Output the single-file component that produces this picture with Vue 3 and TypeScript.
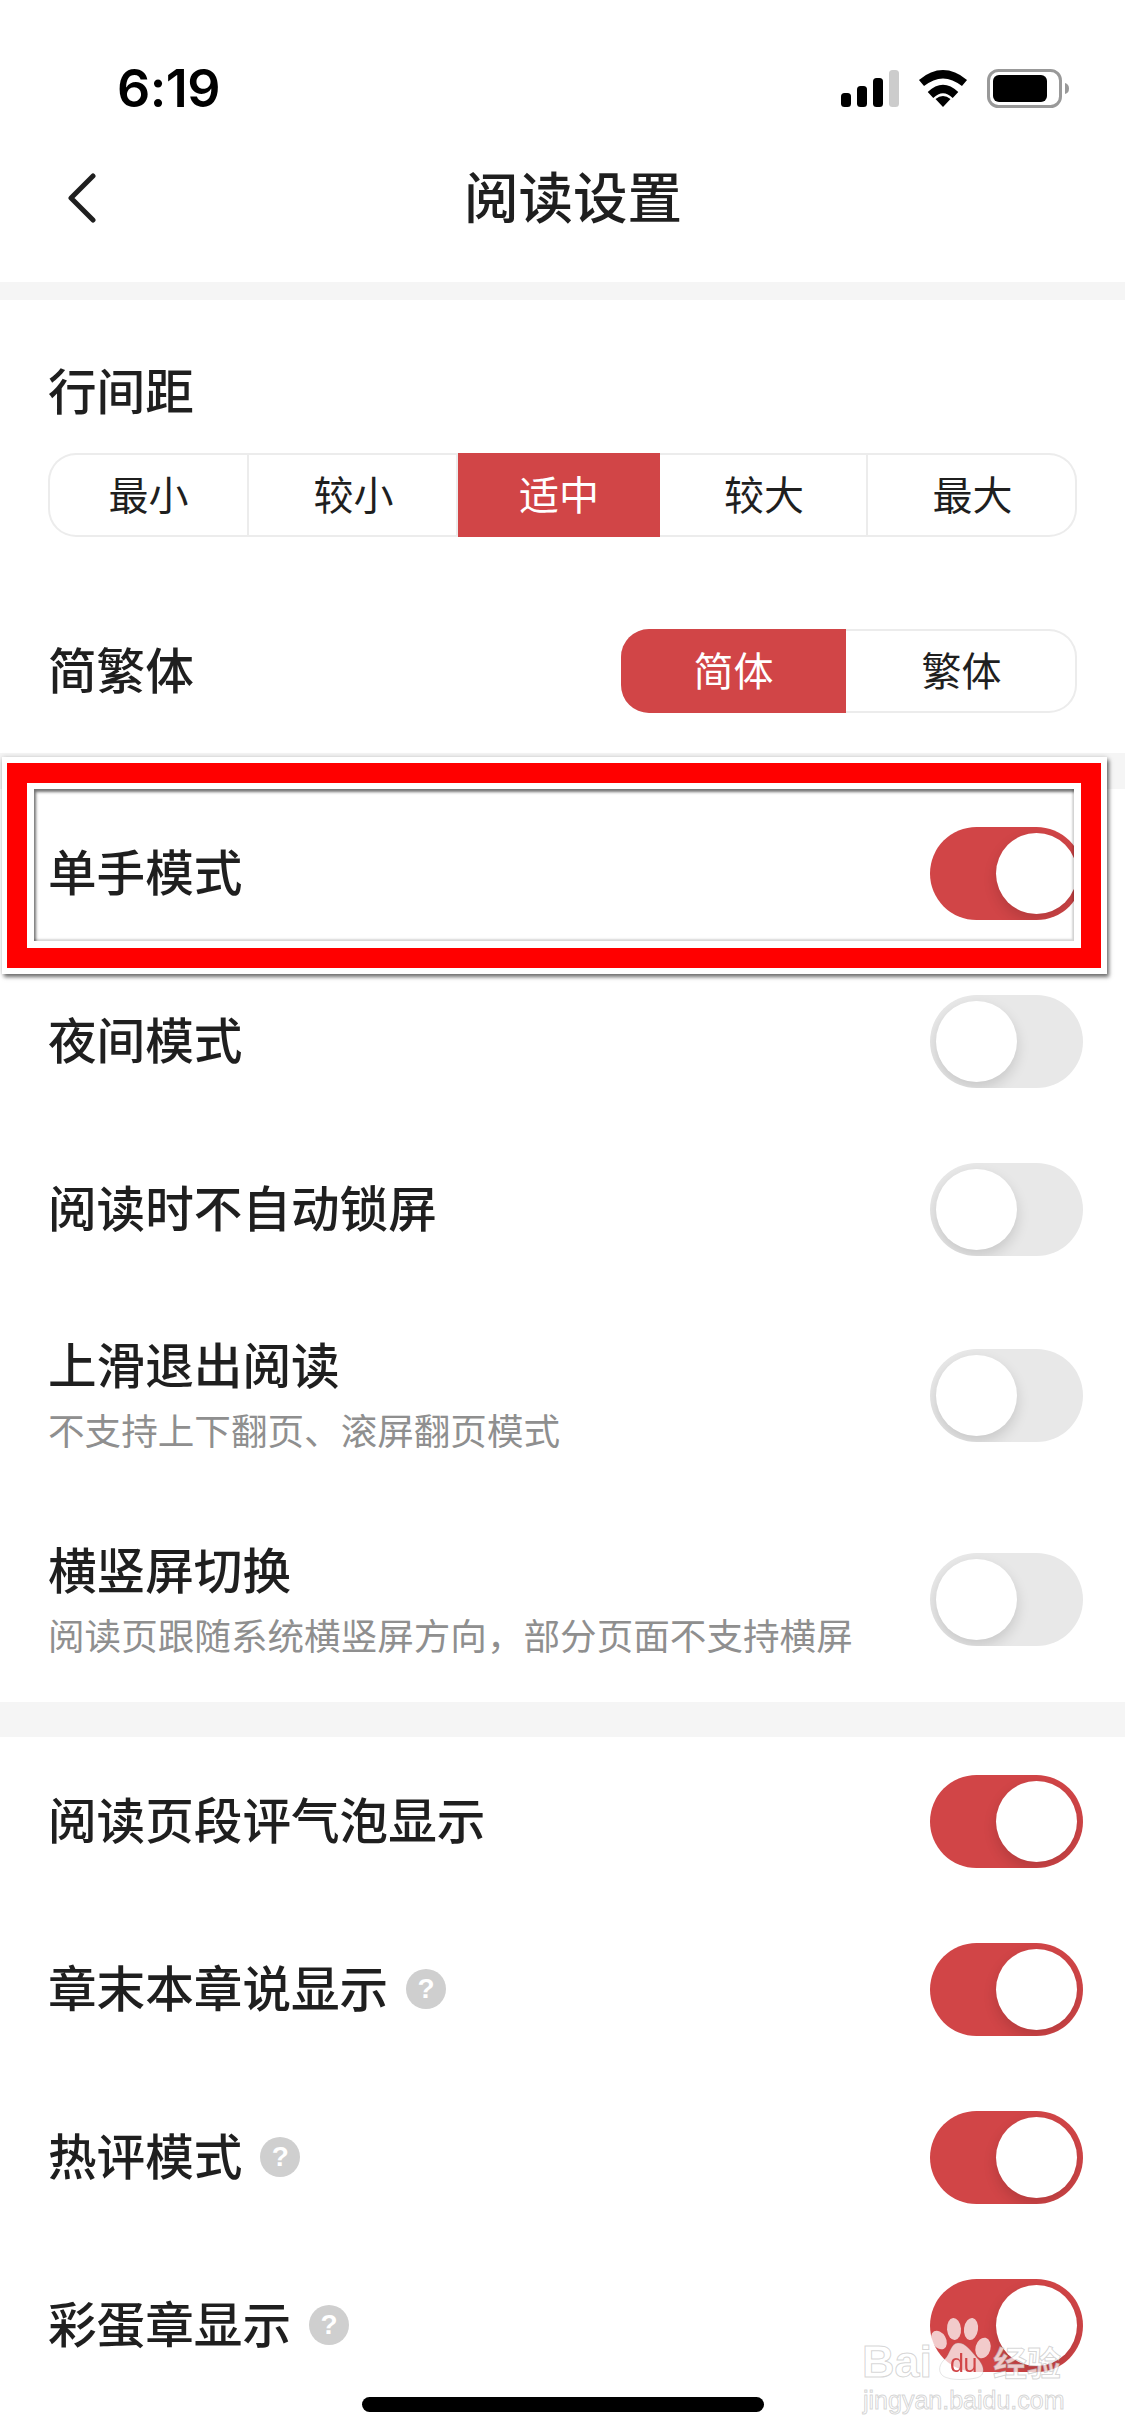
<script setup lang="ts">
interface Row {
  title: string
  sub?: string
  on: boolean
  help?: boolean
}

const spacing = [
  { label: '最小', active: false },
  { label: '较小', active: false },
  { label: '适中', active: true },
  { label: '较大', active: false },
  { label: '最大', active: false }
]

const groupOne: Row[] = [
  { title: '单手模式', on: true },
  { title: '夜间模式', on: false },
  { title: '阅读时不自动锁屏', on: false },
  { title: '上滑退出阅读', sub: '不支持上下翻页、滚屏翻页模式', on: false },
  { title: '横竖屏切换', sub: '阅读页跟随系统横竖屏方向，部分页面不支持横屏', on: false }
]

const groupTwo: Row[] = [
  { title: '阅读页段评气泡显示', on: true },
  { title: '章末本章说显示', on: true, help: true },
  { title: '热评模式', on: true, help: true },
  { title: '彩蛋章显示', on: true, help: true }
]
</script>

<template>
  <div class="page">
    <div class="status">
      <span class="time">6:19</span>
      <div class="status-icons">
        <svg width="58" height="37" viewBox="0 0 58 37">
          <rect x="0" y="23" width="10" height="14" rx="3.5" fill="#000" />
          <rect x="16" y="16" width="10" height="21" rx="3.5" fill="#000" />
          <rect x="32" y="8" width="10" height="29" rx="3.5" fill="#000" />
          <rect x="48" y="0" width="10" height="37" rx="3.5" fill="#ccc" />
        </svg>
        <svg width="50" height="37" viewBox="0 0 50 37">
          <path d="M3.5 13 Q25 -4.5 46.5 13" fill="none" stroke="#000" stroke-width="8" />
          <path d="M12.5 25 Q25 13 37.5 25" fill="none" stroke="#000" stroke-width="8" />
          <path d="M25 37 L17.5 29 Q25 23 32.5 29 Z" fill="#000" />
        </svg>
        <svg width="82" height="39" viewBox="0 0 82 39">
          <rect x="1.5" y="1.5" width="72" height="36" rx="10" fill="none" stroke="#999" stroke-width="3" />
          <rect x="6" y="6" width="54" height="27" rx="6" fill="#000" />
          <path d="M78 14 Q82 15 82 19.5 Q82 24 78 25 Z" fill="#999" />
        </svg>
      </div>
    </div>

    <header class="nav">
      <svg class="back" width="28" height="50" viewBox="0 0 28 50">
        <path d="M25 3 L3 25 L25 47" fill="none" stroke="#1f1f1f" stroke-width="5" stroke-linecap="round" stroke-linejoin="round" />
      </svg>
      <h1 class="nav-title">阅读设置</h1>
    </header>

    <div class="band thin"></div>

    <section class="prefs">
      <div class="label">行间距</div>
      <div class="seg seg-five">
        <div v-for="s in spacing" :key="s.label" class="seg-item" :class="{ active: s.active }">{{ s.label }}</div>
      </div>
      <div class="script-row">
        <div class="label">简繁体</div>
        <div class="seg seg-two">
          <div class="seg-item active">简体</div>
          <div class="seg-item">繁体</div>
        </div>
      </div>
    </section>

    <div class="band wide"></div>

    <section>
      <div v-for="r in groupOne" :key="r.title" class="row" :class="{ tall: r.sub }">
        <div class="row-text">
          <div class="row-title">{{ r.title }}</div>
          <div v-if="r.sub" class="row-sub">{{ r.sub }}</div>
        </div>
        <div class="toggle" :class="{ on: r.on }"><span class="knob"></span></div>
      </div>
    </section>

    <div class="band"></div>

    <section>
      <div v-for="r in groupTwo" :key="r.title" class="row">
        <div class="row-text inline">
          <div class="row-title">{{ r.title }}</div>
          <span v-if="r.help" class="help">?</span>
        </div>
        <div class="toggle" :class="{ on: r.on }"><span class="knob"></span></div>
      </div>
    </section>

    <div class="home"></div>

    <div class="callout">
      <div class="callout-red">
        <div class="callout-white">
          <div class="callout-inner"></div>
        </div>
      </div>
    </div>

    <div class="watermark">
      <svg class="paw" width="64" height="72" viewBox="0 0 64 72">
        <ellipse cx="10" cy="24" rx="7" ry="10" transform="rotate(-30 10 24)" />
        <ellipse cx="25" cy="13" rx="7" ry="11" transform="rotate(-5 25 13)" />
        <ellipse cx="42" cy="13" rx="7" ry="11" transform="rotate(8 42 13)" />
        <ellipse cx="54" cy="32" rx="7.5" ry="10.5" transform="rotate(15 54 32)" />
        <path class="palm" d="M29 27 C37 27 42 35 48 42 C56 50 57 60 47 62 C38 64 24 64 19 62 C9 60 8 50 16 43 C21 38 22 27 29 27 Z" />
      </svg>
      <span class="wm-bai">Bai</span>
      <span class="wm-du">du</span>
      <span class="wm-cn">经验</span>
      <span class="wm-url">jingyan.baidu.com</span>
    </div>
  </div>
</template>

<style>
html, body {
  margin: 0;
  background: #fff;
  overflow: hidden;
}
</style>

<style scoped>
.page {
  position: relative;
  width: 1125px;
  height: 2436px;
  overflow: hidden;
  background: #fff;
  color: #1f1f1f;
  font-family: "Noto Sans CJK SC", "Noto Sans", sans-serif;
}

.status {
  display: flex;
  align-items: center;
  justify-content: space-between;
  height: 37px;
  padding: 70px 56px 0 117px;
}
.time {
  font-family: Inter, "Liberation Sans", sans-serif;
  font-size: 52px;
  font-weight: 600;
  line-height: 37px;
  color: #000;
  letter-spacing: -0.5px;
}
.status-icons {
  display: flex;
  align-items: center;
  gap: 19px;
}

.nav {
  display: flex;
  align-items: center;
  height: 168px;
  margin-top: 7px;
  padding: 0 75px 0 68px;
}
.back {
  flex: none;
}
.nav-title {
  flex: 1;
  margin: 0;
  padding-bottom: 6px;
  text-align: center;
  font-size: 54.5px;
  font-weight: 500;
  line-height: 60px;
}

.band {
  height: 35px;
  background: #f5f5f5;
}
.band.thin {
  height: 18px;
}
.band.wide {
  height: 36px;
}

.prefs {
  box-sizing: border-box;
  height: 453px;
  padding: 65px 48px 0 48px;
}
.label {
  padding-bottom: 6px;
  font-size: 48.6px;
  font-weight: 500;
  line-height: 48px;
}
.seg {
  display: grid;
  box-sizing: border-box;
  height: 84px;
  border-radius: 28px;
  overflow: hidden;
  box-shadow: inset 0 0 0 2px #ececec;
  font-size: 40px;
}
.seg-five {
  grid-template-columns: 201px 209px 202px 208px 209px;
  margin-top: 34px;
}
.seg-two {
  grid-template-columns: 225px 231px;
  width: 456px;
}
.seg-item {
  display: flex;
  align-items: center;
  justify-content: center;
  box-sizing: border-box;
  padding-bottom: 4px;
  box-shadow: inset -2px 0 0 #ececec;
}
.seg-item:last-child {
  box-shadow: none;
}
.seg-item.active {
  background: #d14547;
  color: #fff;
  box-shadow: none;
}
.script-row {
  display: flex;
  align-items: center;
  justify-content: space-between;
  margin-top: 92px;
}

.row {
  display: flex;
  align-items: center;
  justify-content: space-between;
  box-sizing: border-box;
  height: 168px;
  padding: 0 42px 0 48px;
}
.row.tall {
  height: 204.5px;
}
.row.tall .row-text {
  padding-bottom: 2px;
}
.row-text.inline {
  display: flex;
  align-items: center;
  gap: 18px;
}
.row-title {
  padding-bottom: 6px;
  font-size: 48.6px;
  font-weight: 500;
  line-height: 56px;
}
.row-sub {
  margin-top: 10px;
  font-size: 36.6px;
  line-height: 46px;
  color: #8f8f8f;
}
.help {
  display: flex;
  align-items: center;
  justify-content: center;
  width: 40px;
  height: 40px;
  border-radius: 50%;
  background: #cfcfcf;
  color: #fff;
  font-family: "Liberation Sans", sans-serif;
  font-size: 28px;
  font-weight: 700;
}

.toggle {
  position: relative;
  flex: none;
  width: 153px;
  height: 93px;
  border-radius: 46.5px;
  overflow: hidden;
  background: #e8e8e8;
}
.toggle.on {
  background: #d14547;
}
.knob {
  position: absolute;
  top: 6px;
  left: 6px;
  width: 81px;
  height: 81px;
  border-radius: 50%;
  background: #fff;
  box-shadow: 0 6px 14px rgba(0, 0, 0, 0.14);
}
.toggle.on .knob {
  left: 66px;
}

.home {
  position: absolute;
  left: 362px;
  top: 2397px;
  width: 402px;
  height: 15px;
  border-radius: 8px;
  background: #000;
}

.callout {
  position: absolute;
  left: 2px;
  top: 757px;
  box-sizing: border-box;
  width: 1105px;
  height: 217px;
  border: 6px solid #fff;
  border-left-width: 5px;
  box-shadow: 2px 3px 4px rgba(0, 0, 0, 0.55), 0 0 5px rgba(0, 0, 0, 0.15);
}
.callout-red {
  box-sizing: border-box;
  height: 100%;
  border: 20px solid #f00;
}
.callout-white {
  box-sizing: border-box;
  height: 100%;
  border: 7px solid #fff;
  border-top-width: 6px;
}
.callout-inner {
  height: 100%;
  box-shadow: inset 2px 3px 3px rgba(0, 0, 0, 0.55), inset -2px -2px 2px rgba(0, 0, 0, 0.16);
}

.watermark {
  position: absolute;
  left: 860px;
  top: 2310px;
  width: 210px;
  height: 110px;
  font-family: "Liberation Sans", sans-serif;
  color: rgba(255, 255, 255, 0.72);
  -webkit-text-stroke: 1px rgba(150, 150, 150, 0.4);
}
.paw {
  position: absolute;
  left: 69px;
  top: 6px;
  overflow: visible;
  fill: rgba(255, 255, 255, 0.72);
}
.palm {
  stroke: rgba(150, 150, 150, 0.25);
  stroke-width: 1;
}
.wm-bai {
  position: absolute;
  left: 2px;
  top: 34px;
  font-size: 45px;
  line-height: 36px;
  font-weight: 700;
}
.wm-du {
  position: absolute;
  left: 90px;
  top: 39px;
  font-size: 25px;
  line-height: 28px;
  letter-spacing: -0.5px;
  color: transparent;
  background: linear-gradient(#d14547 23px, rgba(150, 150, 150, 0.4) 23px);
  -webkit-background-clip: text;
  background-clip: text;
  -webkit-text-stroke: 0;
}
.wm-cn {
  position: absolute;
  left: 133px;
  top: 34px;
  font-family: "Noto Sans CJK SC", sans-serif;
  font-size: 34px;
  line-height: 36px;
  font-weight: 700;
}
.wm-url {
  position: absolute;
  left: 3px;
  top: 76px;
  font-size: 25px;
  line-height: 28px;
}
</style>
